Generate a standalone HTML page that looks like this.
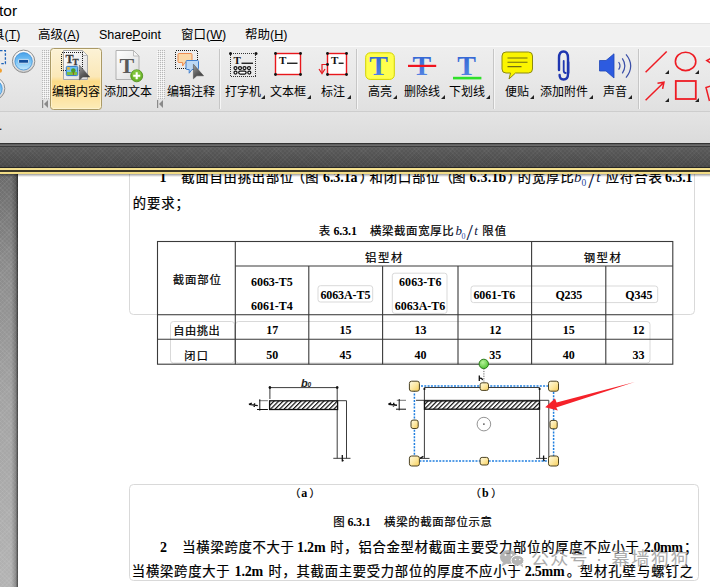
<!DOCTYPE html>
<html lang="zh-CN">
<head>
<meta charset="utf-8">
<title>PDF Editor</title>
<style>
*{box-sizing:border-box;margin:0;padding:0}
html,body{width:710px;height:587px;overflow:hidden;background:#fff}
body{position:relative;font-family:"Liberation Sans","Noto Sans CJK SC",sans-serif;color:#000}
.abs{position:absolute}
#title{left:0;top:0;width:710px;height:23px;background:#fff}
#title span{position:absolute;left:-1px;top:1px;font-size:15.5px;line-height:20px;color:#000}
#menubar{left:0;top:23px;width:710px;height:23px;background:#f1f1f1;border-top:1px solid #e3e3e3}
#menubar span{position:absolute;top:3px;font-size:12.5px;line-height:16px;white-space:nowrap;color:#000}
#menubar u{text-decoration-thickness:1px;text-underline-offset:1px}
#toolbar{left:0;top:46px;width:710px;height:66px;background:linear-gradient(#eeeeee,#e8e8e8 50%,#e0e0e0);border-top:1px solid #fbfbfb;border-bottom:1px solid #cdcdcd}
#bar2{left:0;top:112px;width:710px;height:31px;background:linear-gradient(#e4e4e4,#dbdbdb)}
#band{left:0;top:143px;width:710px;height:25px;background:repeating-linear-gradient(45deg,rgba(255,255,255,.035) 0 1px,rgba(0,0,0,0) 1px 3px),repeating-linear-gradient(-45deg,rgba(255,255,255,.035) 0 1px,rgba(0,0,0,0) 1px 3px),linear-gradient(#5f5f5f,#555 40%,#474747)}
#lm{left:0;top:174px;width:18px;height:413px;background:linear-gradient(90deg,rgba(0,0,0,0) 62%,rgba(0,0,0,.22) 88%,rgba(0,0,0,.62) 100%),repeating-linear-gradient(45deg,rgba(255,255,255,.06) 0 1px,rgba(0,0,0,0) 1px 3px),repeating-linear-gradient(-45deg,rgba(255,255,255,.06) 0 1px,rgba(0,0,0,0) 1px 3px),linear-gradient(#6b6b6b,#8b8b8b 22%,#a3a3a3 55%,#b3b3b3)}
#doc{left:0;top:174px;width:710px;height:413px;background:#fff}
.lbl{position:absolute;top:85px;font-size:12px;line-height:14px;white-space:nowrap;color:#000}
.dd{position:absolute;width:0;height:0;border-left:4px solid transparent;border-bottom:4px solid #222}
.sep{position:absolute;top:49px;width:2px;height:60px;border-left:1px solid #c6c6c6;border-right:1px solid #f6f6f6}
</style>
</head>
<body>
<div id="title" class="abs"><span>tor</span></div>
<div id="menubar" class="abs">
<span style="left:-8px">具(<u>T</u>)</span>
<span style="left:38px">高级(<u>A</u>)</span>
<span style="left:99px">Share<u>P</u>oint</span>
<span style="left:181px">窗口(<u>W</u>)</span>
<span style="left:245px">帮助(<u>H</u>)</span>
</div>
<div id="toolbar" class="abs"></div>
<!-- selected button -->
<div class="abs" style="left:50px;top:48px;width:52px;height:62px;border:1px solid #ab9a66;border-radius:3.5px;box-shadow:inset 0 0 0 1px rgba(255,250,225,.55);background:linear-gradient(#fcf2d6,#fbe8b8 46%,#fcdb88 54%,#fde09a 75%,#fdecb8)"></div>
<div class="sep" style="left:219px"></div>
<div class="sep" style="left:356px"></div>
<div class="sep" style="left:493px"></div>
<div class="sep" style="left:638px"></div>
<svg class="abs" style="left:0;top:46px" width="710" height="65" viewBox="0 46 710 65">
<defs>
<linearGradient id="gpage" x1="0" y1="0" x2="1" y2="1"><stop offset="0" stop-color="#ffffff"/><stop offset="1" stop-color="#dcdcdc"/></linearGradient>
<radialGradient id="gblue" cx="0.5" cy="0.35" r="0.7"><stop offset="0" stop-color="#7cc4f5"/><stop offset="1" stop-color="#2a86d8"/></radialGradient>
<linearGradient id="gring" x1="0" y1="0" x2="0" y2="1"><stop offset="0" stop-color="#ffffff"/><stop offset="1" stop-color="#cfcfcf"/></linearGradient>
<pattern id="grip" x="42" y="50" width="2" height="2" patternUnits="userSpaceOnUse"><rect width="2" height="2" fill="#ececec"/><rect width="1" height="1" fill="#b8b8b8"/><rect x="1" y="1" width="1" height="1" fill="#fafafa"/></pattern>
<linearGradient id="gblue2" x1="0" y1="0" x2="0" y2="1"><stop offset="0" stop-color="#4aa3ea"/><stop offset="0.55" stop-color="#7cc6f6"/><stop offset="1" stop-color="#c8eafc"/></linearGradient>
<linearGradient id="gcur" x1="0" y1="0" x2="0.6" y2="1"><stop offset="0" stop-color="#a2a2a2"/><stop offset="0.6" stop-color="#5c5c5c"/><stop offset="1" stop-color="#3e3e3e"/></linearGradient>
<linearGradient id="gT" x1="0" y1="0" x2="0" y2="1"><stop offset="0" stop-color="#2c5fd0"/><stop offset="1" stop-color="#5b8ae6"/></linearGradient>
</defs>
<rect x="42" y="50" width="8" height="49" fill="url(#grip)"/><rect x="157" y="50" width="8" height="49" fill="url(#grip)"/>
<!-- left partial icons -->
<rect x="-4" y="50.6" width="9.4" height="13" fill="none" stroke="#1c62b8" stroke-width="1.3" stroke-dasharray="2.5 1.5"/>
<circle cx="-0.3" cy="70.5" r="2.3" fill="#f0a030"/>
<circle cx="23.6" cy="61.3" r="11.2" fill="url(#gring)" stroke="#8e8e8e" stroke-width="1"/>
<circle cx="23.6" cy="61.3" r="8.7" fill="url(#gblue2)" stroke="#3f8fd6" stroke-width="0.8"/>
<rect x="18.6" y="59.4" width="10" height="3.8" rx="0.6" fill="#14509c" stroke="#e8f4fd" stroke-width="0.8"/>
<circle cx="-6.6" cy="88.6" r="11.4" fill="url(#gring)" stroke="#8e8e8e" stroke-width="1"/>
<circle cx="-6.6" cy="88.6" r="8.8" fill="url(#gblue2)" stroke="#3f8fd6" stroke-width="0.8"/>
<!-- collapse arrows -->
<g fill="#8a8a8a" stroke="none">
<rect x="42" y="100" width="1.2" height="8"/><path d="M48 100 L44 104 L48 108 Z"/>
<rect x="157" y="100" width="1.2" height="8"/><path d="M163 100 L159 104 L163 108 Z"/>
</g>
<!-- ICONS -->
<!-- edit content -->
<g>
<path d="M63.5 50.5 H82.5 L87.5 55.5 V79.5 H63.5 Z" fill="url(#gpage)" stroke="#a9a9a9" stroke-width="1"/>
<path d="M82.5 50.5 V55.5 H87.5 Z" fill="#f4f4f4" stroke="#a9a9a9" stroke-width="0.8"/>
<rect x="61.5" y="52.5" width="21" height="18" fill="none" stroke="#1a1a1a" stroke-width="1" stroke-dasharray="1 1" shape-rendering="crispEdges"/>
<text x="65.4" y="62.7" font-family="Liberation Serif,serif" font-weight="700" font-size="12" fill="#3c3c3c" stroke="#3c3c3c" stroke-width="0.3">T</text>
<text x="72.4" y="64.8" font-family="Liberation Serif,serif" font-weight="700" font-size="9.2" fill="#3c3c3c" stroke="#3c3c3c" stroke-width="0.3">T</text>
<rect x="66.3" y="66.4" width="11.4" height="9.2" rx="1" fill="#6cc0f0" stroke="#2f78c4" stroke-width="1"/>
<rect x="67" y="72" width="10" height="3" fill="#7cc242"/>
<rect x="67.2" y="67.2" width="2.6" height="2.4" fill="#f7b329"/>
<circle cx="73.3" cy="70.6" r="2.3" fill="#4a9a2a"/>
<rect x="72.9" y="72.5" width="0.9" height="2.4" fill="#a04020"/>
<path d="M79.4 65.2 V80 L82.8 77 H89.8 Z" fill="url(#gcur)" stroke="#4a4a4a" stroke-width="0.5"/>
</g>
<!-- add text -->
<g>
<path d="M116 50.5 H133.5 L139 56 V79.5 H116 Z" fill="url(#gpage)" stroke="#b0b0b0" stroke-width="1"/>
<path d="M133.5 50.5 V56 H139 Z" fill="#f6f6f6" stroke="#b0b0b0" stroke-width="0.8"/>
<text x="119.6" y="72.8" font-family="Liberation Serif,serif" font-weight="700" font-size="22" fill="#5a5a5a">T</text>
<circle cx="136.7" cy="75.8" r="6" fill="#6bb32a" stroke="#4a8a18" stroke-width="0.8"/>
<circle cx="136.7" cy="74.6" r="4.6" fill="#8ed04a" opacity="0.6"/>
<path d="M133.2 75.8 H140.2 M136.7 72.3 V79.3" stroke="#fff" stroke-width="2.1"/>
</g>
<!-- edit comment -->
<g>
<rect x="175.5" y="50.5" width="22" height="18" fill="none" stroke="#1a1a1a" stroke-width="1" stroke-dasharray="1 1" shape-rendering="crispEdges"/>
<path d="M179 53.5 H191 Q192 53.5 192 54.5 V61.5 Q192 62.5 191 62.5 H185 L182.6 66 V62.5 H179 Q178 62.5 178 61.5 V54.5 Q178 53.5 179 53.5 Z" fill="#fbd9a8" stroke="#ee8c50" stroke-width="1"/>
<path d="M187 60.5 H197.5 Q198.5 60.5 198.5 61.5 V68.5 Q198.5 69.5 197.5 69.5 H192 L189.2 73.2 V69.5 H187 Q186 69.5 186 68.5 V61.5 Q186 60.5 187 60.5 Z" fill="#bcd8f4" stroke="#3f7fcf" stroke-width="1"/>
<path d="M193.4 64.2 V78.8 L196.8 75.8 H203.6 Z" fill="url(#gcur)" stroke="#444" stroke-width="0.5"/>
</g>
<!-- typewriter -->
<g>
<rect x="230.5" y="53.5" width="25" height="23" fill="none" stroke="#333" stroke-width="1" stroke-dasharray="1 1" shape-rendering="crispEdges"/>
<circle cx="230.5" cy="53.5" r="1.5" fill="#111"/><circle cx="256" cy="53.5" r="1.5" fill="#111"/>
<text x="233.4" y="64" font-family="Liberation Serif,serif" font-weight="700" font-size="11" fill="#111">T</text>
<rect x="241.5" y="62.6" width="11.5" height="1.3" fill="#111"/>
<g fill="#fff" stroke="#111" stroke-width="1.25">
<circle cx="235.5" cy="68" r="1.5"/><circle cx="240" cy="68" r="1.5"/><circle cx="244.5" cy="68" r="1.5"/><circle cx="249" cy="68" r="1.5"/>
<circle cx="235.5" cy="72.6" r="1.5"/><rect x="238.7" y="71.2" width="7.4" height="2.8" rx="1.4"/><circle cx="249.3" cy="72.6" r="1.5"/>
</g>
</g>
<!-- text box -->
<g>
<rect x="275.5" y="53.5" width="25" height="21" fill="#fff" stroke="#e8171c" stroke-width="1.4"/>
<g fill="#111"><circle cx="275.5" cy="53.5" r="1.4"/><circle cx="300.5" cy="53.5" r="1.4"/><circle cx="275.5" cy="74.5" r="1.4"/><circle cx="300.5" cy="74.5" r="1.4"/></g>
<text x="279" y="64" font-family="Liberation Serif,serif" font-weight="700" font-size="11" fill="#111">T</text>
<rect x="287" y="62.6" width="10.5" height="1.3" fill="#111"/>
</g>
<!-- callout -->
<g>
<rect x="327.5" y="53.5" width="19" height="21" fill="#fff" stroke="#e8171c" stroke-width="1.4"/>
<path d="M327.5 64.5 H322 V72.5" fill="none" stroke="#e8171c" stroke-width="1.2"/>
<path d="M319 69 L322 73.6 L325 69" fill="none" stroke="#e8171c" stroke-width="1.2"/>
<g fill="#111"><circle cx="327.5" cy="53.5" r="1.4"/><circle cx="346.5" cy="53.5" r="1.4"/><circle cx="327.5" cy="74.5" r="1.4"/><circle cx="346.5" cy="74.5" r="1.4"/><circle cx="327.5" cy="64.5" r="1.4"/></g>
<text x="331" y="64" font-family="Liberation Serif,serif" font-weight="700" font-size="11" fill="#111">T</text>
<rect x="338.6" y="62.6" width="5" height="1.3" fill="#111"/>
</g>
<!-- highlight -->
<g>
<rect x="365.7" y="52.8" width="28.6" height="26.6" rx="4.5" fill="#ffff4d" stroke="#d3d200" stroke-width="1"/>
<text x="369.2" y="75" font-family="Liberation Serif,serif" font-weight="700" font-size="28" fill="url(#gT)">T</text>
</g>
<!-- strikeout -->
<g>
<text x="412.4" y="75" font-family="Liberation Serif,serif" font-weight="700" font-size="28" fill="url(#gT)">T</text>
<rect x="408" y="64.8" width="28.2" height="2.2" fill="#f0141e"/>
</g>
<!-- underline -->
<g>
<text x="457.2" y="75" font-family="Liberation Serif,serif" font-weight="700" font-size="28" fill="url(#gT)">T</text>
<rect x="453" y="76.8" width="28.4" height="2.6" fill="#2fe02a"/>
</g>
<!-- sticky note -->
<g>
<path d="M506 52 H528.5 Q532.5 52 532.5 56 V69 Q532.5 73 528.5 73 H515.5 L509 79 L510.5 73 H506 Q502 73 502 69 V56 Q502 52 506 52 Z" fill="#fbf500" stroke="#8c8a10" stroke-width="1"/>
<path d="M507.5 58 H527.5 M507.5 62.3 H527.5 M507.5 66.6 H521.5" stroke="#6e6c14" stroke-width="1.1"/>
</g>
<!-- paperclip -->
<g fill="none" stroke="#1f36b0" stroke-linecap="round">
<path d="M559 70 V58 Q559 51.5 563.5 51.5 Q568 51.5 568 58 V74 Q568 79.5 563.5 79.5 Q559.6 79.5 559.6 75" stroke-width="2.4"/>
<path d="M563.7 61 V70.5 Q563.7 73 565.8 73 " stroke-width="1.8"/>
<path d="M568.6 62 V73" stroke-width="1.6"/>
</g>
<!-- sound -->
<g>
<path d="M599.5 60.5 H606 L614 53.8 V78 L606 71 H599.5 Z" fill="#2d5be0" stroke="#2046b8" stroke-width="0.8"/>
<path d="M618.6 62 Q621.4 65.8 618.6 69.6" fill="none" stroke="#3a4ea8" stroke-width="1.2"/>
<path d="M622.3 58.3 Q627.3 65.8 622.3 73.3" fill="none" stroke="#3a4ea8" stroke-width="1.2"/>
<path d="M626 54.3 Q635.4 65.8 626 77.6" fill="none" stroke="#3a4ea8" stroke-width="1.2"/>
</g>
<!-- drawing tools -->
<g fill="none" stroke="#ee1c24" stroke-width="1.5">
<path d="M645.6 72.2 L666.7 51.5"/>
<ellipse cx="685.6" cy="61.4" rx="10.2" ry="9.2" stroke-width="1.6"/>
<path d="M645.6 100.3 L664 82.2 M657.5 83.2 L664 82.2 L662.6 88.8"/>
<rect x="675.8" y="81" width="20" height="18" stroke-width="1.8"/>
<path d="M713 57.5 L706.8 60.5 L713 64.5"/>
<path d="M713 85.3 L706 87.5 L709.5 101"/>
</g>
</svg>
<span class="lbl" style="left:52px">编辑内容</span>
<span class="lbl" style="left:104px">添加文本</span>
<span class="lbl" style="left:167px">编辑注释</span>
<span class="lbl" style="left:225px">打字机</span><i class="dd" style="left:261px;top:95px"></i>
<span class="lbl" style="left:270px">文本框</span><i class="dd" style="left:307px;top:95px"></i>
<span class="lbl" style="left:321px">标注</span><i class="dd" style="left:347px;top:95px"></i>
<span class="lbl" style="left:368px">高亮</span><i class="dd" style="left:393px;top:95px"></i>
<span class="lbl" style="left:404px">删除线</span><i class="dd" style="left:441px;top:95px"></i>
<span class="lbl" style="left:449px">下划线</span><i class="dd" style="left:486px;top:95px"></i>
<span class="lbl" style="left:505px">便贴</span><i class="dd" style="left:530px;top:95px"></i>
<span class="lbl" style="left:540px">添加附件</span><i class="dd" style="left:589px;top:95px"></i>
<span class="lbl" style="left:603px">声音</span><i class="dd" style="left:627.5px;top:95px"></i>
<i class="dd" style="left:665px;top:70px"></i><i class="dd" style="left:695px;top:70px"></i>
<i class="dd" style="left:665px;top:98px"></i><i class="dd" style="left:695px;top:98px"></i>
<div id="bar2" class="abs"><span style="position:absolute;left:-1px;top:7px;font-size:12px;line-height:14px">.</span></div>
<div id="band" class="abs"></div>
<div class="abs" style="left:0;top:143px;width:710px;height:4px;background:linear-gradient(#333 0,#333 25%,#5a5a5a 25%,#6e6e6e 62%,#3c3c3c 75%,#3c3c3c)"></div>
<div class="abs" style="left:0;top:167px;width:710px;height:7px;background:linear-gradient(#262626 0,#262626 14.3%,#f3de8b 14.3%,#f6e394 47%,#3b3728 50%,#3b3728 68%,#f3de8b 71.5%,#f1da82 100%);z-index:5"></div>
<div class="abs" style="left:0;top:174px;width:710px;height:3px;background:linear-gradient(rgba(0,0,0,.38),rgba(0,0,0,0));z-index:5"></div>
<div id="doc" class="abs"></div>
<div id="lm" class="abs"></div>
<svg class="abs" style="left:0;top:174px" width="710" height="413" viewBox="0 174 710 413">
<g fill="none" stroke="#d9d9d9" stroke-width="1">
<rect x="129.5" y="160" width="565" height="154.5" rx="4"/>
<rect x="170.5" y="321.5" width="64" height="41.5" rx="3"/>
<rect x="235.5" y="321.5" width="414.5" height="41.5" rx="3"/>
<rect x="318" y="285.7" width="54.7" height="16.3" rx="2.5"/>
<rect x="392.3" y="273.2" width="54.7" height="40.2" rx="2.5"/>
<rect x="471" y="286" width="186.7" height="16.6" rx="2.5"/>
<rect x="129.5" y="484.5" width="569" height="96" rx="4"/>
</g>
<g fill="none" stroke="#3a3a3a" stroke-width="1.1">
<rect x="157.5" y="241.5" width="515.3" height="122.7"/>
<path d="M235.3 241.5V364.2 M308.8 266V364.2 M382.6 266V364.2 M458 266V364.2 M531.6 241.5V364.2 M605.8 266V364.2"/>
<path d="M235.3 266H672.8 M157.5 314.8H672.8 M157.5 339.3H672.8"/>
</g>
<g font-family="'Liberation Serif','Noto Sans CJK SC',sans-serif" font-weight="400" fill="#000" stroke="#000" stroke-width="0.22">
<text x="159.5" y="182.1" font-size="14" font-weight="700" stroke="none">1</text>
<text x="181.3" y="182.1" font-size="13.3" textLength="112" lengthAdjust="spacing">截面自由挑出部位</text>
<text x="291.8" y="182.1" font-size="13.3">（</text>
<text x="305.3" y="182.1" font-size="13.3">图</text>
<text x="323" y="182.1" font-size="14" textLength="34.6" lengthAdjust="spacing" font-weight="700" stroke="none">6.3.1a</text>
<text x="359.8" y="182.1" font-size="13.3">）</text>
<text x="369.6" y="182.1" font-size="13.3" textLength="70" lengthAdjust="spacing">和闭口部位</text>
<text x="439.8" y="182.1" font-size="13.3">（</text>
<text x="452.3" y="182.1" font-size="13.3">图</text>
<text x="469.6" y="182.1" font-size="14" textLength="36.8" lengthAdjust="spacing" font-weight="700" stroke="none">6.3.1b</text>
<text x="507.7" y="182.1" font-size="13.3">）</text>
<text x="517.8" y="182.1" font-size="13.3" textLength="56" lengthAdjust="spacing">的宽厚比</text>
<g font-weight="400" fill="#0e1640" stroke="none"><text x="574" y="182.1" font-size="15" font-style="italic">b</text><text x="581.6" y="186" font-size="9.5" fill="#2b4aa0">0</text><text x="588.2" y="187.8" font-size="25">/</text><text x="596.2" y="182.1" font-size="15" font-style="italic">t</text></g>
<text x="605.8" y="182.1" font-size="13.3" textLength="56" lengthAdjust="spacing">应符合表</text>
<text x="665" y="182.1" font-size="14" textLength="27.6" lengthAdjust="spacing" font-weight="700" stroke="none">6.3.1</text>
<text x="132.8" y="208" font-size="13.3" textLength="56" lengthAdjust="spacing">的要求；</text>
<text x="318.8" y="235.3" font-size="11.4">表</text>
<text x="333.5" y="235.3" font-size="12" textLength="23.4" lengthAdjust="spacing" font-weight="700" stroke="none">6.3.1</text>
<text x="369.9" y="235.3" font-size="11.4" textLength="83.8" lengthAdjust="spacing">横梁截面宽厚比</text>
<g font-weight="400" fill="#0e1640" stroke="none"><text x="455.4" y="235.3" font-size="13" font-style="italic">b</text><text x="461.5" y="238.6" font-size="8" fill="#2b4aa0">0</text><text x="466.5" y="239.8" font-size="23">/</text><text x="474.3" y="235.3" font-size="13" font-style="italic">t</text></g>
<text x="482.3" y="235.3" font-size="11.4" textLength="23.8" lengthAdjust="spacing">限值</text>
<text x="365.1" y="262" font-size="11.4" textLength="37.2" lengthAdjust="spacing">铝型材</text>
<text x="583.7" y="262" font-size="11.4" textLength="37.2" lengthAdjust="spacing">钢型材</text>
<text x="172.8" y="283.5" font-size="11.4" textLength="48" lengthAdjust="spacing">截面部位</text>
<text x="251" y="285.7" font-size="12" textLength="41.7" lengthAdjust="spacing" font-weight="700" stroke="none">6063-T5</text>
<text x="251" y="310" font-size="12" textLength="41.7" lengthAdjust="spacing" font-weight="700" stroke="none">6061-T4</text>
<text x="320.4" y="298.6" font-size="12" textLength="50" lengthAdjust="spacing" font-weight="700" stroke="none">6063A-T5</text>
<text x="399" y="285.7" font-size="12" textLength="42.4" lengthAdjust="spacing" font-weight="700" stroke="none">6063-T6</text>
<text x="394.8" y="310" font-size="12" textLength="50.4" lengthAdjust="spacing" font-weight="700" stroke="none">6063A-T6</text>
<text x="473.4" y="298.8" font-size="12" textLength="41.8" lengthAdjust="spacing" font-weight="700" stroke="none">6061-T6</text>
<text x="555.4" y="298.8" font-size="12" textLength="26.8" lengthAdjust="spacing" font-weight="700" stroke="none">Q235</text>
<text x="625.2" y="298.8" font-size="12" textLength="27.4" lengthAdjust="spacing" font-weight="700" stroke="none">Q345</text>
<text x="173.3" y="334.6" font-size="11.2" textLength="46.4" lengthAdjust="spacing">自由挑出</text>
<text x="266.2" y="334" font-size="12" font-weight="700" stroke="none">17</text>
<text x="339.6" y="334" font-size="12" font-weight="700" stroke="none">15</text>
<text x="414.6" y="334" font-size="12" font-weight="700" stroke="none">13</text>
<text x="489.2" y="334" font-size="12" font-weight="700" stroke="none">12</text>
<text x="562.8" y="334" font-size="12" font-weight="700" stroke="none">15</text>
<text x="632.4" y="334" font-size="12" font-weight="700" stroke="none">12</text>
<text x="184.3" y="359.8" font-size="11.2" textLength="23.6" lengthAdjust="spacing">闭口</text>
<text x="266.2" y="359.3" font-size="12" font-weight="700" stroke="none">50</text>
<text x="339.6" y="359.3" font-size="12" font-weight="700" stroke="none">45</text>
<text x="414.6" y="359.3" font-size="12" font-weight="700" stroke="none">40</text>
<text x="489.2" y="359.3" font-size="12" font-weight="700" stroke="none">35</text>
<text x="562.8" y="359.3" font-size="12" font-weight="700" stroke="none">40</text>
<text x="632.4" y="359.3" font-size="12" font-weight="700" stroke="none">33</text>
<text x="289.8" y="497" font-size="10.6">（</text>
<text x="301.2" y="497" font-size="12" font-weight="700" stroke="none">a</text>
<text x="309.6" y="497" font-size="10.6">）</text>
<text x="470.3" y="497" font-size="10.6">（</text>
<text x="482" y="497" font-size="12" font-weight="700" stroke="none">b</text>
<text x="491.2" y="497" font-size="10.6">）</text>
<text x="333.3" y="526.4" font-size="11.4">图</text>
<text x="347.4" y="526.4" font-size="12" textLength="23.4" lengthAdjust="spacing" font-weight="700" stroke="none">6.3.1</text>
<text x="384.1" y="526.4" font-size="11.4" textLength="107.8" lengthAdjust="spacing">横梁的截面部位示意</text>
<text x="160" y="551.7" font-size="14" font-weight="700" stroke="none">2</text>
<text x="182.3" y="551.7" font-size="13.3" textLength="111.6" lengthAdjust="spacing">当横梁跨度不大于</text>
<text x="297" y="551.7" font-size="14" textLength="28.6" lengthAdjust="spacing" font-weight="700" stroke="none">1.2m</text>
<text x="330.3" y="551.7" font-size="13.3" textLength="308.6" lengthAdjust="spacing">时，铝合金型材截面主要受力部位的厚度不应小于</text>
<text x="643.8" y="551.7" font-size="14" textLength="39.2" lengthAdjust="spacing" font-weight="700" stroke="none">2.0mm</text>
<text x="683.9" y="551.7" font-size="13.3">；</text>
<text x="131.8" y="575.6" font-size="13.3" textLength="97.8" lengthAdjust="spacing">当横梁跨度大于</text>
<text x="234.6" y="575.6" font-size="14" textLength="28.6" lengthAdjust="spacing" font-weight="700" stroke="none">1.2m</text>
<text x="268.5" y="575.6" font-size="13.3" textLength="252" lengthAdjust="spacing">时，其截面主要受力部位的厚度不应小于</text>
<text x="524.8" y="575.6" font-size="14" textLength="39.8" lengthAdjust="spacing" font-weight="700" stroke="none">2.5mm</text>
<text x="566.7" y="575.6" font-size="13.3">。</text>
<text x="579.7" y="575.6" font-size="13.3" textLength="113.4" lengthAdjust="spacing">型材孔壁与螺钉之</text>
</g>
<defs><pattern id="hatch" width="3.2" height="3.2" patternUnits="userSpaceOnUse" patternTransform="rotate(-45)"><rect width="3.2" height="3.2" fill="#fff"/><rect width="3.2" height="1.2" fill="#111"/></pattern>
<linearGradient id="gh" x1="0" y1="0" x2="1" y2="1"><stop offset="0" stop-color="#fffae4"/><stop offset="0.5" stop-color="#fde9a4"/><stop offset="1" stop-color="#f7cd58"/></linearGradient>
<radialGradient id="gg" cx="0.4" cy="0.35" r="0.7"><stop offset="0" stop-color="#b6f29a"/><stop offset="1" stop-color="#4cc22e"/></radialGradient></defs>
<g fill="none" stroke="#3c3c3c" stroke-width="1">
<path d="M269.8 387.6H337.2 M269.9 386V399 M337.2 386V458.4"/>
<path d="M337.8 400.7H346.5V458.4 M333.3 458.3H350.5"/>
<path d="M259 400.7H267.9" stroke="#777"/><path d="M257 409.5H267.9 M259.8 399.3V410.6" stroke="#111"/>
</g>
<rect x="269.6" y="400.8" width="68" height="8.7" fill="url(#hatch)" stroke="#111" stroke-width="1.3"/>
<path d="M248.9 404.4L257.8 405.6 M248.9 404.4L251.8 403.2 M254.6 403.2L254.2 407" fill="none" stroke="#111" stroke-width="1.4"/>
<path d="M342.3 455V461.4 M342.3 461.4L343.4 460" fill="none" stroke="#111" stroke-width="1.3"/>
<circle cx="269.9" cy="387.6" r="1.3" fill="#111"/><circle cx="337.2" cy="387.6" r="1.3" fill="#111"/>
<text x="301" y="386.6" font-family="'Liberation Sans',sans-serif" font-style="italic" font-weight="700" font-size="11" fill="#222">b<tspan font-size="6.5" dy="0.4" dx="-0.3">0</tspan></text>
<g fill="none" stroke="#3c3c3c" stroke-width="1">
<path d="M424.4 458.4V387.5H539.6V458.4 M416 400.3H548.8V458.4"/>
<path d="M396.8 400.3H406" stroke="#777"/><path d="M396 409.2H406 M399.2 399V410.4" stroke="#111"/>
<path d="M420 458.4H429.5 M536 458.4H547"/>
</g>
<rect x="424.5" y="400.9" width="115" height="8.3" fill="url(#hatch)" stroke="#111" stroke-width="1.3"/>
<path d="M388.4 404.2L397 405.2 M388.4 404.2L391.2 403 M393.8 402.8L393.4 406.6" fill="none" stroke="#111" stroke-width="1.4"/>
<path d="M420 458.4L423.4 456.4 M543.6 455.4V461.2 M543.6 461.2L544.6 460 M479.3 375.6V381 M479.3 378.6Q481.8 377.2 482.6 380.2" fill="none" stroke="#111" stroke-width="1.3"/>
<circle cx="424.4" cy="389" r="1.1" fill="#111"/><circle cx="539.6" cy="389" r="1.1" fill="#111"/>
<circle cx="483.9" cy="424.1" r="6.8" fill="none" stroke="#777" stroke-width="0.8"/><circle cx="483.9" cy="424.1" r="0.9" fill="#555"/>
<rect x="414.4" y="385.9" width="139.2" height="75.1" fill="none" stroke="#1f7fe0" stroke-width="1.5" stroke-dasharray="2 1.3"/>
<path d="M483.9 368.5V381.5" stroke="#666" stroke-width="1" stroke-dasharray="1.2 1.2"/>
<g fill="url(#gh)" stroke="#4d4322" stroke-width="1">
<rect x="409.4" y="381.2" width="10" height="10" rx="2.2"/>
<rect x="548.5" y="381.2" width="10" height="10" rx="2.2"/>
<rect x="409.4" y="456" width="10" height="10" rx="2.2"/>
<rect x="548.5" y="456" width="10" height="10" rx="2.2"/>
<rect x="480.1" y="382.8" width="8.4" height="7.6" rx="2"/>
<rect x="480.1" y="457.4" width="8.4" height="7.6" rx="2"/>
<rect x="411.0" y="420.1" width="7.2" height="8.4" rx="2"/>
<rect x="550.0" y="420.40000000000003" width="7.2" height="8.4" rx="2"/>
</g>
<circle cx="483.8" cy="363.9" r="4.7" fill="url(#gg)" stroke="#2c7a1c" stroke-width="1"/>
<path d="M634.8 381.9L556.6 402.4L555 398.5L545.2 407.3L557.9 410.6L556.2 407.4Z" fill="#f5222a"/>
<g fill="#a2a2a2" opacity="0.8">
<ellipse cx="508.5" cy="557" rx="8.6" ry="7"/><path d="M503 562L501.5 566.5L507 563.5Z"/>
<ellipse cx="517.5" cy="560.5" rx="6.4" ry="5.2" stroke="#fff" stroke-width="1"/><path d="M520 565L523 567.5L522.5 564Z"/>
<circle cx="505.5" cy="555" r="1" fill="#fff"/><circle cx="511.5" cy="555" r="1" fill="#fff"/><circle cx="515.5" cy="559.5" r="0.8" fill="#fff"/><circle cx="519.8" cy="559.5" r="0.8" fill="#fff"/>
</g>
<g font-family="'Liberation Sans','Noto Sans CJK SC',sans-serif" font-size="18" fill="#979797" opacity="0.8">
<text x="531" y="565" textLength="56.5" lengthAdjust="spacing">公众号</text><text x="596" y="565">·</text><text x="611.5" y="565" textLength="77" lengthAdjust="spacing">幕墙狗狗</text>
</g>
</svg>
</body>
</html>
